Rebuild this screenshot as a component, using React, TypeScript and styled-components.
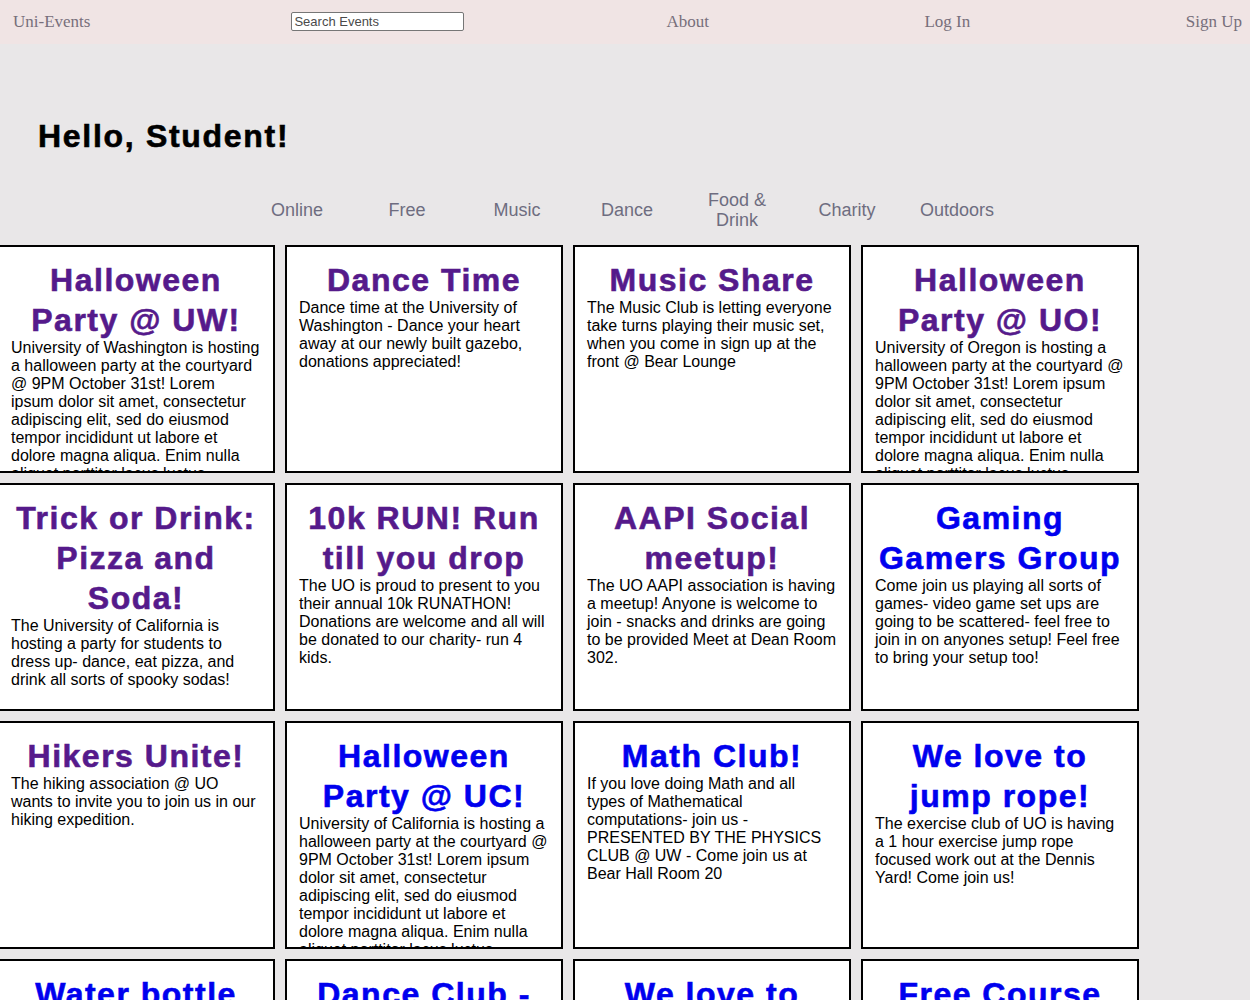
import styled, { createGlobalStyle } from "styled-components";

type EventItem = {
  title: string;
  description: string;
  visited?: boolean;
};

const events: EventItem[] = [
  {
    title: "Halloween Party @ UW!",
    description:
      "University of Washington is hosting a halloween party at the courtyard @ 9PM October 31st! Lorem ipsum dolor sit amet, consectetur adipiscing elit, sed do eiusmod tempor incididunt ut labore et dolore magna aliqua. Enim nulla aliquet porttitor lacus luctus accumsan tortor posuere.",
    visited: true,
  },
  {
    title: "Dance Time",
    description:
      "Dance time at the University of Washington - Dance your heart away at our newly built gazebo, donations appreciated!",
    visited: true,
  },
  {
    title: "Music Share",
    description:
      "The Music Club is letting everyone take turns playing their music set, when you come in sign up at the front @ Bear Lounge",
    visited: true,
  },
  {
    title: "Halloween Party @ UO!",
    description:
      "University of Oregon is hosting a halloween party at the courtyard @ 9PM October 31st! Lorem ipsum dolor sit amet, consectetur adipiscing elit, sed do eiusmod tempor incididunt ut labore et dolore magna aliqua. Enim nulla aliquet porttitor lacus luctus accumsan tortor posuere.",
    visited: true,
  },
  {
    title: "Trick or Drink: Pizza and Soda!",
    description:
      "The University of California is hosting a party for students to dress up- dance, eat pizza, and drink all sorts of spooky sodas!",
    visited: true,
  },
  {
    title: "10k RUN! Run till you drop",
    description:
      "The UO is proud to present to you their annual 10k RUNATHON! Donations are welcome and all will be donated to our charity- run 4 kids.",
    visited: true,
  },
  {
    title: "AAPI Social meetup!",
    description:
      "The UO AAPI association is having a meetup! Anyone is welcome to join - snacks and drinks are going to be provided Meet at Dean Room 302.",
    visited: true,
  },
  {
    title: "Gaming Gamers Group",
    description:
      "Come join us playing all sorts of games- video game set ups are going to be scattered- feel free to join in on anyones setup! Feel free to bring your setup too!",
  },
  {
    title: "Hikers Unite!",
    description:
      "The hiking association @ UO wants to invite you to join us in our hiking expedition.",
    visited: true,
  },
  {
    title: "Halloween Party @ UC!",
    description:
      "University of California is hosting a halloween party at the courtyard @ 9PM October 31st! Lorem ipsum dolor sit amet, consectetur adipiscing elit, sed do eiusmod tempor incididunt ut labore et dolore magna aliqua. Enim nulla aliquet porttitor lacus luctus accumsan tortor posuere.",
  },
  {
    title: "Math Club!",
    description:
      "If you love doing Math and all types of Mathematical computations- join us - PRESENTED BY THE PHYSICS CLUB @ UW - Come join us at Bear Hall Room 20",
  },
  {
    title: "We love to jump rope!",
    description:
      "The exercise club of UO is having a 1 hour exercise jump rope focused work out at the Dennis Yard! Come join us!",
  },
  {
    title: "Water bottle flip",
    description:
      "Bring your own water bottle and show off your best flips at the quad!",
  },
  {
    title: "Dance Club - Salsa",
    description: "The Dance Club is hosting a salsa night, beginners welcome!",
  },
  {
    title: "We love to paint!",
    description: "The art club is painting murals at the student union.",
  },
  {
    title: "Free Course Tutoring",
    description: "Free tutoring for all intro courses at the library.",
  },
];

const categories = [
  "Online",
  "Free",
  "Music",
  "Dance",
  "Food & Drink",
  "Charity",
  "Outdoors",
];

const GlobalStyle = createGlobalStyle`
  body {
    margin: 0;
    background-color: #e9e7e8;
    font-family: "Liberation Sans", Arial, sans-serif;
  }
`;

const NavBar = styled.nav`
  height: 44px;
  display: flex;
  align-items: center;
  padding: 0 8px 0 13px;
  background-color: #f0e4e4;
  font-family: "Liberation Serif", "Times New Roman", serif;
  font-size: 17px;
`;

const NavLeft = styled.div`
  display: flex;
  align-items: center;
  gap: 201px;
`;

const NavRight = styled.div`
  flex: 1;
  display: flex;
  align-items: center;
  justify-content: space-between;
  margin-left: 202px;
`;

const NavLink = styled.a`
  color: #776f7b;
  text-decoration: none;
  cursor: pointer;
`;

const SearchInput = styled.input`
  box-sizing: border-box;
  width: 173px;
  height: 19px;
  margin-top: -2px;
  padding: 1px 2px;
  border: 1px solid #767676;
  border-radius: 2px;
  background: #ffffff;
  font-family: "Liberation Sans", Arial, sans-serif;
  font-size: 13px;
  &::placeholder {
    color: #4a4a4a;
  }
`;

const Greeting = styled.h1`
  margin: 72px 0 0 38px;
  font-size: 32px;
  line-height: 40px;
  font-weight: 700;
  letter-spacing: 1.7px;
  -webkit-text-stroke: 0.6px #000000;
  color: #000000;
`;

const CategoryRow = styled.div`
  display: flex;
  justify-content: center;
  align-items: center;
  gap: 30px;
  height: 50px;
  margin-top: 29px;
  padding-left: 4px;
`;

const Category = styled.a`
  width: 80px;
  text-align: center;
  font-size: 18px;
  line-height: 20px;
  color: #6e6d80;
  cursor: pointer;
`;

const CardGrid = styled.div`
  display: grid;
  grid-template-columns: repeat(4, 278px);
  grid-auto-rows: 228px;
  gap: 10px;
  margin: 10px 0 0 -3px;
  padding-bottom: 20px;
`;

const Card = styled.div`
  box-sizing: border-box;
  border: 2px solid #000000;
  background-color: #ffffff;
  padding: 13px 12px 0;
  overflow: hidden;
`;

const CardTitle = styled.a<{ $visited?: boolean }>`
  display: block;
  text-align: center;
  font-size: 32px;
  line-height: 40px;
  font-weight: 700;
  letter-spacing: 1.5px;
  color: ${(p) => (p.$visited ? "#551a8b" : "#0000ee")};
  -webkit-text-stroke: 0.6px ${(p) => (p.$visited ? "#551a8b" : "#0000ee")};
  text-decoration: none;
  cursor: pointer;
`;

const CardText = styled.p`
  margin: -1px 0 0;
  font-size: 16px;
  line-height: 18px;
  color: #000000;
`;

export default function App() {
  return (
    <>
      <GlobalStyle />
      <NavBar>
        <NavLeft>
          <NavLink>Uni-Events</NavLink>
          <SearchInput type="text" placeholder="Search Events" />
        </NavLeft>
        <NavRight>
          <NavLink>About</NavLink>
          <NavLink>Log In</NavLink>
          <NavLink>Sign Up</NavLink>
        </NavRight>
      </NavBar>
      <Greeting>Hello, Student!</Greeting>
      <CategoryRow>
        {categories.map((c) => (
          <Category key={c}>{c}</Category>
        ))}
      </CategoryRow>
      <CardGrid>
        {events.map((ev) => (
          <Card key={ev.title}>
            <CardTitle $visited={ev.visited}>{ev.title}</CardTitle>
            <CardText>{ev.description}</CardText>
          </Card>
        ))}
      </CardGrid>
    </>
  );
}
